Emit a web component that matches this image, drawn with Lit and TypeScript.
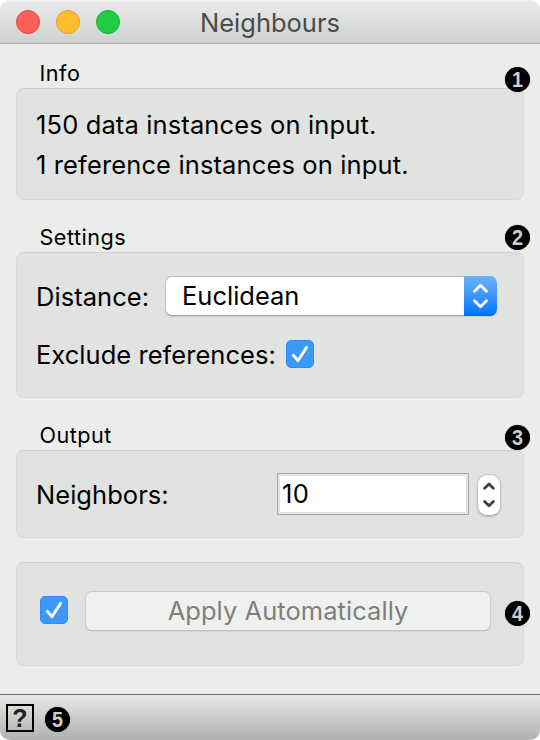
import { LitElement, html, css } from "lit";
import { customElement, property } from "lit/decorators.js";

@customElement("number-badge")
class NumberBadge extends LitElement {
  @property() value = "";
  static styles = css`
    :host { display: block; width: 25px; height: 25px; }
    .disc {
      width: 25px; height: 25px; border-radius: 50%; background: #000;
      box-shadow: 0 0 1px #0009; color: #ccd0cc;
      font: bold 22.5px/25px "Liberation Sans", Arial, sans-serif; text-align: center;
    }
    .digit { display: block; transform: scaleX(0.88); }
  `;
  render() {
    return html`<div class="disc"><span class="digit">${this.value}</span></div>`;
  }
}

@customElement("check-box")
class CheckBox extends LitElement {
  static styles = css`
    :host { display: block; width: 28px; height: 28px; flex: none; }
    .box {
      box-sizing: border-box; width: 28px; height: 28px; border-radius: 5px;
      background: #3b99fc; border: 1px solid #2f8cf8;
    }
    svg { display: block; }
  `;
  render() {
    return html`<div class="box">
      <svg width="26" height="26" viewBox="1 1 26 26" fill="none" stroke-linecap="round" stroke-linejoin="round">
        <path d="M7.4 16.4 L12 21.8 L20.6 8.4" stroke="#2577d6" stroke-width="3" opacity="0.6" />
        <path d="M7.4 15.4 L12 20.8 L20.6 7.4" stroke="#fff" stroke-width="3" />
      </svg>
    </div>`;
  }
}

@customElement("app-root")
class AppRoot extends LitElement {
  static styles = css`
    :host {
      display: block; width: 540px; height: 740px; overflow: hidden; background: #fff;
      font-family: Inter, "Liberation Sans", sans-serif; font-size: 25.5px; color: #000;
    }
    * { box-sizing: border-box; }
    .window {
      display: flex; flex-direction: column; width: 540px; height: 740px;
      border-radius: 10px; overflow: hidden; background: #ebedea;
    }
    .titlebar {
      display: grid; grid-template-columns: 120px 300px 120px; height: 44px; flex: none;
      border-bottom: 1px solid #aaaca9;
      background: linear-gradient(#f4f6f3 0, #e8eae7 3px, #cfd1ce 43px);
    }
    .lights { display: flex; gap: 16px; padding: 10px 0 0 16px; }
    .light { width: 24px; height: 24px; border-radius: 50%; flex: none; }
    .red { background: #ff5f57; border: 1px solid #e2463f; }
    .amber { background: #ffbd2e; border: 1px solid #e0a029; }
    .green { background: #1fcc42; border: 1px solid #14ae32; }
    .title { text-align: center; color: #4b4b4a; line-height: 45px; }
    .content { flex: 1; padding: 0 16px; }
    .caption { padding-left: 23.5px; font-size: 21.6px; line-height: 30px; letter-spacing: 0.5px; }
    .caption.first { margin-top: 14px; }
    .caption.second { margin-top: 22px; }
    .caption.third { margin-top: 22px; }
    .group {
      position: relative; width: 508px; border: 1px solid #d8dad7; border-top-color: #cfd1ce;
      border-radius: 8px; background: #e1e3e0; padding: 0 19px;
    }
    .info { height: 112px; padding-top: 16px; letter-spacing: 0.13px; }
    .line { line-height: 40px; white-space: nowrap; }
    .settings { height: 146px; padding-top: 23px; }
    .output { height: 88px; padding-top: 22px; }
    .apply { height: 104px; margin-top: 24px; padding: 28px 0 0 23px; }
    .row { display: flex; }
    .row .line { flex: none; line-height: 42px; height: 40px; letter-spacing: 0.04px; }
    .output .row .line { line-height: 43px; }
    .badge { position: absolute; right: -7px; z-index: 1; letter-spacing: 0; }
    .b1 { top: -22px; }
    .b2 { top: -28px; }
    .b3 { top: -26px; }
    .b4 { top: 38px; }
    .select {
      display: flex; margin-left: auto; width: 332px; height: 40px; border-radius: 7px;
      background: #fff; border: 1px solid #bfc1be; border-right: 0; border-bottom-color: #9fa19e;
      box-shadow: 0 1px 1px #00000018; margin-right: 7px;
    }
    .chosen { flex: 1; padding-left: 16px; line-height: 37px; }
    .arrows {
      width: 33px; height: 40px; margin-top: -1px; border-radius: 0 7px 7px 0;
      background: linear-gradient(#6bb2fa, #3b96fb 50%, #0a7bff 90%, #0765e8);
    }
    .arrows svg, .stepper svg { display: block; }
    .exclude { margin-top: 18px; }
    .exclude check-box { margin: 6px 0 0 10px; }
    .field {
      margin-left: auto; width: 192px; height: 42px; border: 1px solid #a6a8a5;
      background: #fff; box-shadow: inset 0 0 0 2px #e2e4e1; padding-left: 4px; line-height: 40px;
      letter-spacing: 0.4px;
    }
    .stepper {
      width: 24px; height: 42px; margin: 1px 3px 0 8px; background: #fff;
      border: 1px solid #c3c5c2; border-bottom-color: #aeb0ad; border-radius: 10px;
      box-shadow: 0 1px 2px #00000030;
    }
    .apply check-box { margin-top: 5px; }
    .button {
      width: 406px; height: 40px; margin-left: 17px; border: 1px solid #cccecb;
      border-bottom-color: #bfc1be; border-radius: 7px; background: #eff1ee;
      color: #7f807e; text-align: center; line-height: 37px; letter-spacing: 0.05px;
      box-shadow: 0 1px 1px #00000010;
    }
    .footer {
      display: flex; height: 46px; flex: none; border-top: 1px solid #6e706d;
      background: linear-gradient(#e7e9e6, #b0b2af); padding: 9px 0 0 6px;
    }
    .help {
      width: 28px; height: 28px; border: 2px solid #000; color: #222;
      font: bold 25px/25px "Liberation Sans", Arial, sans-serif; text-align: center;
    }
    .footer number-badge { margin: 3px 0 0 11px; }
  `;

  render() {
    return html`
      <div class="window">
        <div class="titlebar">
          <div class="lights">
            <div class="light red"></div>
            <div class="light amber"></div>
            <div class="light green"></div>
          </div>
          <div class="title">Neighbours</div>
        </div>
        <div class="content">
          <div class="caption first">Info</div>
          <div class="group info">
            <number-badge class="badge b1" value="1"></number-badge>
            <div class="line">150 data instances on input.</div>
            <div class="line">1 reference instances on input.</div>
          </div>
          <div class="caption second">Settings</div>
          <div class="group settings">
            <number-badge class="badge b2" value="2"></number-badge>
            <div class="row">
              <div class="line">Distance:</div>
              <div class="select">
                <div class="chosen">Euclidean</div>
                <div class="arrows">
                  <svg width="33" height="40" fill="none" stroke="#fff" stroke-width="2.8" stroke-linecap="round" stroke-linejoin="round">
                    <path d="M10.5 15.3 L16.5 9.2 L22.5 15.3 M10.5 24.7 L16.5 30.8 L22.5 24.7" />
                  </svg>
                </div>
              </div>
            </div>
            <div class="row exclude">
              <div class="line">Exclude references:</div>
              <check-box></check-box>
            </div>
          </div>
          <div class="caption third">Output</div>
          <div class="group output">
            <number-badge class="badge b3" value="3"></number-badge>
            <div class="row">
              <div class="line">Neighbors:</div>
              <div class="field">10</div>
              <div class="stepper">
                <svg width="22" height="40" fill="none" stroke="#3f403f" stroke-width="2.8" stroke-linecap="round" stroke-linejoin="round">
                  <path d="M6.6 13.3 L11 9 L15.4 13.3 M6.6 26.5 L11 30.8 L15.4 26.5" />
                </svg>
              </div>
            </div>
          </div>
          <div class="group apply">
            <number-badge class="badge b4" value="4"></number-badge>
            <div class="row">
              <check-box></check-box>
              <div class="button">Apply Automatically</div>
            </div>
          </div>
        </div>
        <div class="footer">
          <div class="help">?</div>
          <number-badge value="5"></number-badge>
        </div>
      </div>
    `;
  }
}
